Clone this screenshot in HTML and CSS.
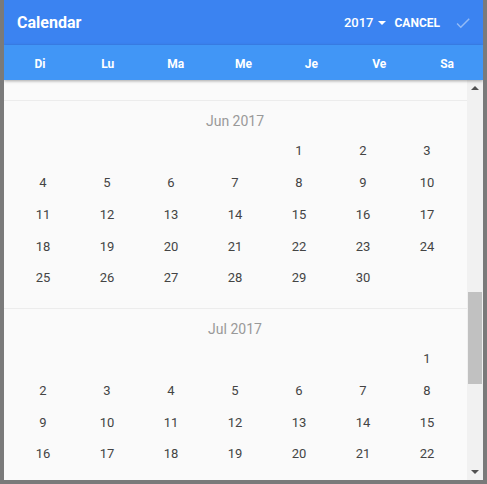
FILE: index.html
```html
<!DOCTYPE html>
<html>
<head>
<meta charset="utf-8">
<link rel="stylesheet" href="styles.css">
</head>
<body>
<div class="dialog">
  <div class="header">
    <div class="title">Calendar</div>
    <div class="year">2017 <span class="caret"></span></div>
    <div class="cancel">CANCEL</div>
    <svg class="check" width="18" height="18" viewBox="0 0 24 24"><path d="M9 16.2L4.8 12l-1.4 1.4L9 19 21 7l-1.4-1.4L9 16.2z" fill="rgba(255,255,255,0.45)"/></svg>
  </div>
  <div class="weekdays">
    <span>Di</span><span>Lu</span><span>Ma</span><span>Me</span><span>Je</span><span>Ve</span><span>Sa</span>
  </div>
  <div class="body">
    <div class="viewport">
      <div class="month">
        <div class="month-title">Jun 2017</div>
        <div class="grid">
          <span></span><span></span><span></span><span></span><span>1</span><span>2</span><span>3</span>
          <span>4</span><span>5</span><span>6</span><span>7</span><span>8</span><span>9</span><span>10</span>
          <span>11</span><span>12</span><span>13</span><span>14</span><span>15</span><span>16</span><span>17</span>
          <span>18</span><span>19</span><span>20</span><span>21</span><span>22</span><span>23</span><span>24</span>
          <span>25</span><span>26</span><span>27</span><span>28</span><span>29</span><span>30</span><span></span>
        </div>
      </div>
      <div class="month">
        <div class="month-title">Jul 2017</div>
        <div class="grid">
          <span></span><span></span><span></span><span></span><span></span><span></span><span>1</span>
          <span>2</span><span>3</span><span>4</span><span>5</span><span>6</span><span>7</span><span>8</span>
          <span>9</span><span>10</span><span>11</span><span>12</span><span>13</span><span>14</span><span>15</span>
          <span>16</span><span>17</span><span>18</span><span>19</span><span>20</span><span>21</span><span>22</span>
        </div>
      </div>
    </div>
    <div class="scrollbar">
      <div class="arrow"><span class="tri-up"></span></div>
      <div class="track"><div class="thumb"></div></div>
      <div class="arrow"><span class="tri-down"></span></div>
    </div>
  </div>
</div>
</body>
</html>
```
FILE: styles.css
```css
html, body {
  margin: 0;
  padding: 0;
}
body {
  background: #7a7a7a;
  width: 487px;
  height: 484px;
  overflow: hidden;
  font-family: Roboto, "Liberation Sans", sans-serif;
}
.dialog {
  width: 479px;
  height: 480px;
  margin-left: 4px;
  background: #fafafa;
  display: flex;
  flex-direction: column;
  overflow: hidden;
}
.header {
  height: 45px;
  flex: none;
  background: #3b83f1;
  display: flex;
  align-items: center;
  padding: 0 11px 0 13px;
  color: #fff;
}
.title {
  flex: 1;
  font-size: 16px;
  font-weight: 700;
}
.year {
  font-size: 13px;
  font-weight: 500;
  display: flex;
  align-items: center;
  gap: 4px;
}
.caret {
  width: 0;
  height: 0;
  border-left: 4px solid transparent;
  border-right: 4px solid transparent;
  border-top: 4px solid #fff;
}
.cancel {
  margin-left: 9px;
  font-size: 12px;
  font-weight: 700;
}
.check {
  margin-left: 14px;
}
.weekdays {
  height: 35px;
  flex: none;
  background: #4196f6;
  display: grid;
  grid-template-columns: repeat(7, 1fr);
  align-items: center;
  padding: 2px 2px 0;
  box-sizing: border-box;
  color: #fff;
  font-size: 12px;
  font-weight: 700;
  text-align: center;
  box-shadow: 0 1px 3px rgba(0, 0, 0, 0.35);
  position: relative;
  z-index: 1;
}
.body {
  flex: 1;
  display: flex;
  min-height: 0;
}
.viewport {
  flex: 1;
  overflow: hidden;
  padding-top: 20px;
}
.month {
  border-top: 1px solid #ececec;
  padding: 6px 8px 14px 7px;
}
.month-title {
  text-align: center;
  line-height: 28px;
  font-size: 14px;
  color: #999;
}
.grid {
  display: grid;
  grid-template-columns: repeat(7, 1fr);
  grid-auto-rows: 31.75px;
  align-items: center;
  text-align: center;
  font-size: 13px;
  color: #444;
}
.scrollbar {
  width: 16px;
  flex: none;
  background: #f1f1f1;
  display: flex;
  flex-direction: column;
}
.arrow {
  height: 16px;
  display: flex;
  align-items: center;
  justify-content: center;
}
.tri-up {
  width: 0;
  height: 0;
  border-left: 4px solid transparent;
  border-right: 4px solid transparent;
  border-bottom: 4px solid #505050;
}
.tri-down {
  width: 0;
  height: 0;
  border-left: 4px solid transparent;
  border-right: 4px solid transparent;
  border-top: 4px solid #505050;
}
.track {
  flex: 1;
  padding: 0 1px;
}
.thumb {
  margin-top: 196px;
  height: 92px;
  background: #c1c1c1;
}
```
